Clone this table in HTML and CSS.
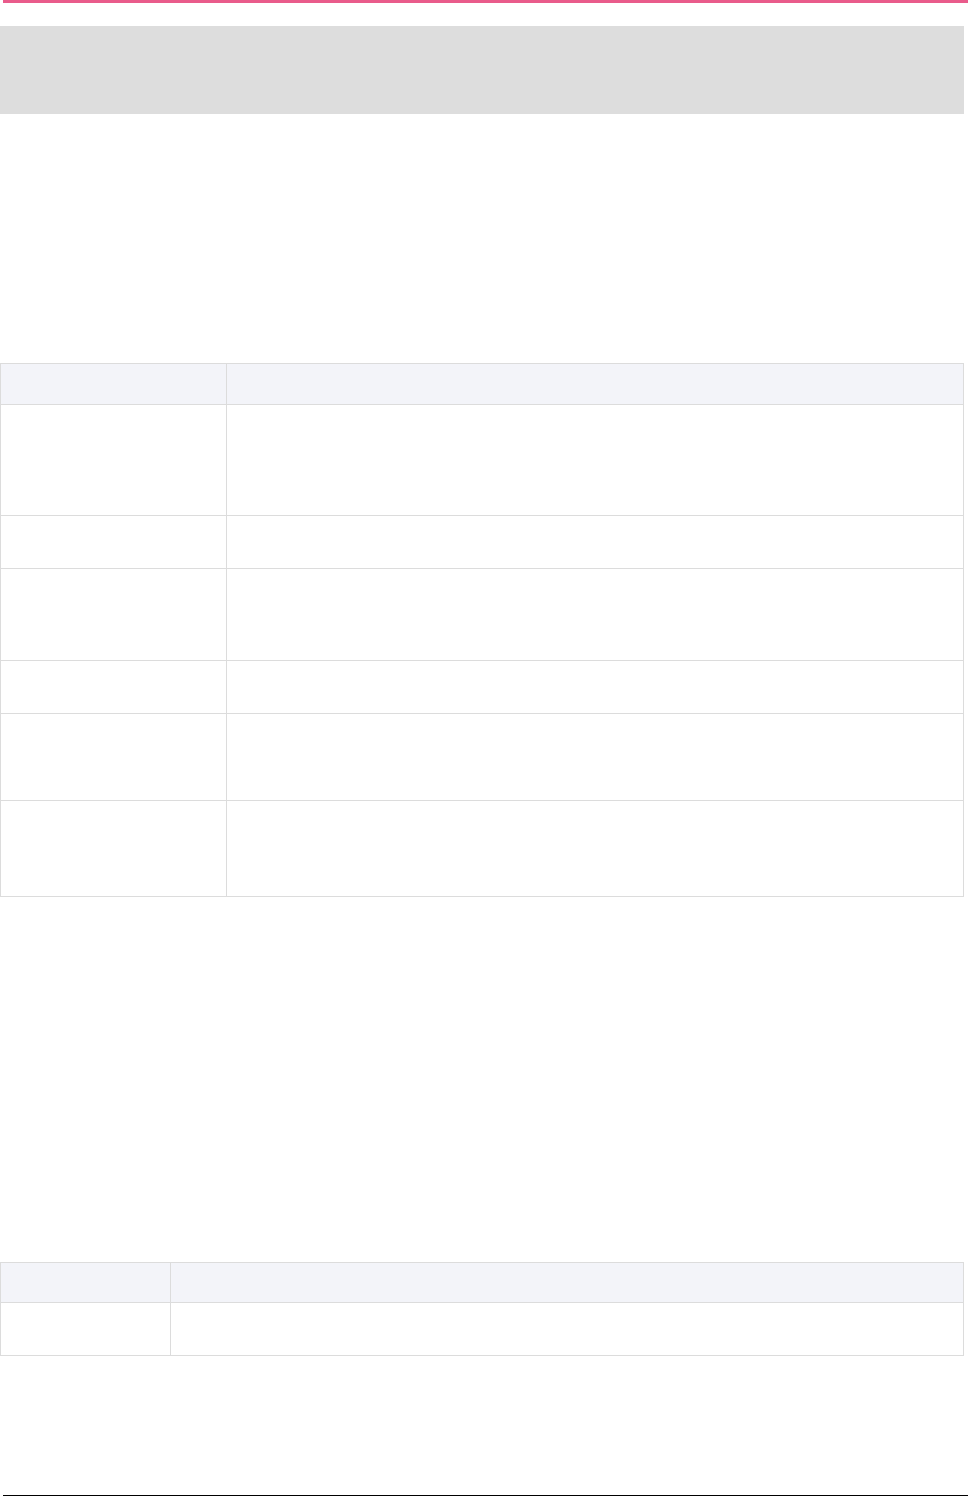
FILE: index.html
```html
<!DOCTYPE html>
<html>
<head>
<meta charset="utf-8">
<link rel="stylesheet" href="styles.css">
</head>
<body>
<div class="page">
  <div class="accent"></div>
  <div class="banner"></div>
  <table class="grid grid-one">
    <colgroup><col class="c1"><col></colgroup>
    <tr class="head h41"><td></td><td></td></tr>
    <tr class="h111"><td></td><td></td></tr>
    <tr class="h53"><td></td><td></td></tr>
    <tr class="h92"><td></td><td></td></tr>
    <tr class="h53"><td></td><td></td></tr>
    <tr class="h87"><td></td><td></td></tr>
    <tr class="h96"><td></td><td></td></tr>
  </table>
  <table class="grid grid-two">
    <colgroup><col class="c2"><col></colgroup>
    <tr class="head h40"><td></td><td></td></tr>
    <tr class="h53"><td></td><td></td></tr>
  </table>
  <div class="footer-rule"></div>
</div>
</body>
</html>
```
FILE: styles.css
```css
html, body {
  margin: 0;
  padding: 0;
  background: #ffffff;
  font-family: "Liberation Sans", Arial, sans-serif;
}
.page {
  width: 968px;
  height: 1497px;
  position: relative;
}
.accent {
  height: 3px;
  margin-left: 3px;
  width: 965px;
  background: #e95b8b;
}
.banner {
  margin-top: 23px;
  width: 964px;
  height: 88px;
  background: #dddddd;
}
.grid {
  border-collapse: collapse;
  width: 964px;
  table-layout: fixed;
}
.grid td {
  border: 1px solid #dcdcdc;
  padding: 0;
}
.grid .head td {
  background: #f3f4f9;
}
.grid-one { margin-top: 249px; }
.grid-two { margin-top: 365px; }
.c1 { width: 226px; }
.c2 { width: 170px; }
.h40 { height: 40px; }
.h41 { height: 41px; }
.h53 { height: 53px; }
.h87 { height: 87px; }
.h92 { height: 92px; }
.h96 { height: 96px; }
.h111 { height: 111px; }
.footer-rule {
  position: absolute;
  left: 3px;
  right: 0;
  top: 1495px;
  height: 1px;
  background: #000000;
}
```
